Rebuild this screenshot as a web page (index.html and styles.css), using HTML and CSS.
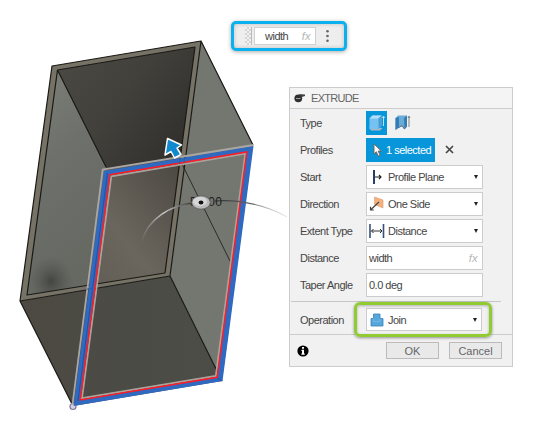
FILE: index.html
```html
<!DOCTYPE html>
<html lang="en">
<head>
<meta charset="utf-8">
<title>Extrude</title>
<link rel="stylesheet" href="styles.css">
</head>
<body>
<main class="canvas">
  <svg class="model" viewBox="0 0 554 421" width="554" height="421">
    <defs>
      <linearGradient id="left" x1="0" y1="0" x2=".3" y2="1"><stop offset="0" stop-color="#7d7f78"/><stop offset=".45" stop-color="#6e716b"/><stop offset="1" stop-color="#666862"/></linearGradient>
      <linearGradient id="back" x1="0" y1="0" x2="1" y2=".7"><stop offset="0" stop-color="#4b4a43"/><stop offset=".5" stop-color="#41403b"/><stop offset="1" stop-color="#302f2b"/></linearGradient>
      <linearGradient id="floor" x1="0" y1="1" x2=".9" y2="0"><stop offset="0" stop-color="#625d54"/><stop offset=".4" stop-color="#6b665d"/><stop offset="1" stop-color="#4c4943"/></linearGradient>
      <linearGradient id="front" x1="0" y1="0" x2="1" y2="0"><stop offset="0" stop-color="#4d4942"/><stop offset=".5" stop-color="#4b4b45"/><stop offset="1" stop-color="#4c4d46"/></linearGradient>
      <radialGradient id="shade"><stop offset="0" stop-color="#353633" stop-opacity=".7"/><stop offset="1" stop-color="#50524e" stop-opacity="0"/></radialGradient>
      <linearGradient id="arcl" x1="0" y1="1" x2="1" y2="0"><stop offset="0" stop-color="#777" stop-opacity=".3"/><stop offset=".6" stop-color="#ccc"/><stop offset="1" stop-color="#333"/></linearGradient>
      <linearGradient id="arcr"><stop offset="0" stop-color="#333"/><stop offset=".5" stop-color="#666"/><stop offset="1" stop-color="#ccc" stop-opacity=".4"/></linearGradient>
      <clipPath id="opening"><path d="M57.5 70 195 47 165 273 27 295Z"/></clipPath>
    </defs>
    <path fill="#767265" d="M52 66 201 41 170 276 20 301Z"/>
    <g clip-path="url(#opening)">
      <path fill="url(#left)" d="M57.5 70 106 167 88 290 27 295Z"/>
      <ellipse cx="51" cy="281" rx="23" ry="25" fill="url(#shade)"/>
      <path fill="url(#back)" d="M57.5 70 195 47 180 166 106 178 106 167Z"/>
      <path fill="url(#floor)" d="M106 170 182 157 165 273 86 287Z"/>
    </g>
    <path fill="#747770" d="M201 41 253 145 222 381 170 276Z"/>
    <path fill="url(#front)" d="M20 301 170 276 222 381 73 406Z"/>
    <g fill="none" stroke="#191917" stroke-width="1.2" stroke-linejoin="round">
      <path d="M52 66 201 41 170 276 20 301ZM57.5 70 195 47 165 273 27 295ZM57.5 70 106 167M201 41 253 145M170 276 222 381M20 301 73 406"/>
      <path stroke-width=".8" d="M182 164 230 261"/>
    </g>
    <circle cx="73" cy="406.500" r="3" fill="#d6d2df" stroke="#827998" stroke-width="1.2"/>
    <path fill="#2f69c0" fill-rule="evenodd" d="M104 171 253.500 146 222.500 381 73.500 406ZM109.500 174.500 79.800 400.300 217.500 377.500 247 151.500Z"/>
    <path fill="none" stroke="#214e98" stroke-width=".8" d="M107.500 173 78 401M216 377 222 381"/>
    <path fill="none" stroke="#aaa7a2" stroke-width="1.800" d="M72.500 404.500 102.700 169.600 253.500 145"/>
    <path fill="none" stroke="#aaa39c" stroke-width="1.800" d="M111.300 176.300 245.300 153.700 215.800 376 82 398.200Z"/>
    <path fill="none" stroke="#ff1c28" stroke-width="1.500" d="M109.800 174.700 246.800 152 217.200 377.300 80.200 399.900Z"/>
    <path fill="none" stroke="#315ca4" stroke-width="1" d="M180 157.500 179.500 164M184.500 157 184 163M87 289 93 288"/>
    <path fill="none" stroke="url(#arcl)" stroke-width="1.300" d="M142 241C148 218 172 205 193 203"/>
    <path fill="none" stroke="url(#arcr)" stroke-width="1.100" d="M215 201C240 199 268 206 287 217"/>
    <text class="dimension" x="190" y="206" textLength="32">50.00</text>
    <ellipse cx="201" cy="202.500" rx="9.300" ry="6.700" fill="#bbb" stroke="#555" stroke-width=".8"/>
    <ellipse cx="200" cy="201.500" rx="7" ry="4.500" fill="#d6d6d6"/>
    <ellipse cx="201" cy="202.500" rx="2.400" ry="1.900" fill="#111"/>
    <path fill="#1089ce" stroke="#fff" stroke-width="1.500" stroke-linejoin="round" d="M167.500 138.500 181.500 145 177 148 181 154.500 174.500 158 171 151.500 165 155Z"/>
  </svg>

  <div class="quick">
    <span class="grip"></span>
    <span class="quick-input"><span>width</span><i class="fx">fx</i></span>
    <svg width="5" height="14" viewBox="0 0 5 14" fill="#666"><circle cx="2.500" cy="2.300" r="1.300"/><circle cx="2.500" cy="7" r="1.300"/><circle cx="2.500" cy="11.700" r="1.300"/></svg>
  </div>

  <section class="panel">
    <header>
      <svg width="12" height="10" viewBox="0 0 12 10"><path d="M5 1 11 1.500V3L8 4Z" fill="#444"/><circle cx="4.300" cy="5.300" r="3.900" fill="#303030"/><path d="M2 5.500h4.500" stroke="#bbb" stroke-width=".8"/></svg>
      <span>EXTRUDE</span>
    </header>
    <div class="fields">
      <div class="row"><label>Type</label>
        <span class="type on"><svg width="17" height="18" viewBox="0 0 17 18"><path d="M1 13.500 3 16.500h9l2.500-2.500" fill="#a9b8c2"/><path d="M1.500 4.500 4.500 1.500H13.500V11.500L10.500 15H1.500Z" fill="#75c1f2"/><path d="M1.500 4.500 4.500 1.500H13.500L10.500 4.500Z" fill="#b2dffa"/><path d="M10.500 4.500 13.500 1.500V11.500L10.500 15Z" fill="#499cd4"/><path d="M15.500 3V12M14.500 4 15.500 2 16.500 4" fill="none" stroke="#d3e8f4" stroke-width=".9"/></svg></span>
        <span class="type"><svg width="17" height="18" viewBox="0 0 17 18"><path d="M1.500 4 4 1.500H13V12.500L10.500 15.500 8 12.500 5 13.500 1.500 16Z" fill="#6aabd8"/><path d="M1.500 4 5 3V13.500L1.500 16ZM10 4 13 1.500V12.500L10.500 15.500Z" fill="#337db5"/><path d="M5 13.500 8 11.500 10.500 15" fill="none" stroke="#667" stroke-width=".9"/><path d="M15 3V13M14 4 15 2 16 4" fill="none" stroke="#777" stroke-width=".9"/></svg></span>
      </div>
      <div class="row"><label>Profiles</label>
        <span class="selected"><svg width="9" height="14" viewBox="0 0 9 14"><path d="M1 1V11L3.300 8.700 5.200 13 7 12.200 5.200 8H8.300Z" fill="#fff" stroke="#79604e" stroke-width=".9"/></svg>1 selected</span>
        <svg class="clear" width="9" height="9" viewBox="0 0 9 9"><path d="M1 1 8 8M8 1 1 8" stroke="#484848" stroke-width="1.700"/></svg>
      </div>
      <div class="row"><label>Start</label>
        <span class="box select"><svg width="18" height="16" viewBox="0 0 18 16"><path d="M5 1V15" stroke="#273f65" stroke-width="2"/><path d="M6 8H12M10 6 12 8 10 10" fill="none" stroke="#222" stroke-width="1.100"/></svg>Profile Plane</span>
      </div>
      <div class="row"><label>Direction</label>
        <span class="box select"><svg width="18" height="16" viewBox="0 0 18 16"><path d="M5.500 1 14 4V12L5.500 8.500Z" fill="#f3b180" stroke="#df9a68" stroke-width=".6"/><path d="M10 6 2 13.500M1.500 10.800V14H4.800" fill="none" stroke="#444" stroke-width="1.200"/></svg>One Side</span>
      </div>
      <div class="row"><label>Extent Type</label>
        <span class="box select"><svg width="18" height="16" viewBox="0 0 18 16"><path d="M1 1V15M14.500 1V15" stroke="#36527b" stroke-width="1.600"/><path d="M2.500 8H13M4.500 6 2.500 8 4.500 10M11 6 13 8 11 10" fill="none" stroke="#333"/></svg>Distance</span>
      </div>
      <div class="row"><label>Distance</label><span class="box">width<i class="fx">fx</i></span></div>
      <div class="row"><label>Taper Angle</label><span class="box">0.0 deg</span></div>
    </div>
    <div class="operation row"><label>Operation</label>
      <span class="highlight"><span class="box select"><svg width="18" height="16" viewBox="0 0 18 16"><path d="M4.500 2H11V6.500H14V14H2V6.500H4.500Z" fill="#55a7dc" stroke="#3883b8" stroke-width=".8"/><path d="M4.500 6.500V9.500H11V6.500" fill="none" stroke="#83bfe5" stroke-width=".7"/></svg>Join</span></span>
    </div>
    <footer>
      <svg class="info" width="12" height="12" viewBox="0 0 12 12"><circle cx="6" cy="6" r="5.600"/><path fill="#fff" d="M5 2h2v1.800H5ZM4.500 4.800H7V8.500H7.700V9.700H4.400V8.500H5V6H4.500Z"/></svg>
      <button>OK</button><button>Cancel</button>
    </footer>
  </section>
</main>
</body>
</html>
```
FILE: styles.css
```css
* { box-sizing: border-box; }
body {
  margin: 0;
  background: #fff;
  color: #454545;
  font: 11px/14px "Liberation Sans", sans-serif;
  letter-spacing: -.5px;
  white-space: nowrap;
}
.canvas { position: relative; width: 554px; height: 421px; overflow: hidden; }
.model { display: block; }
.dimension { font: 12px "Liberation Sans", sans-serif; letter-spacing: 0; fill: #1c1c1c; }

/* Floating windows */
.quick {
  position: absolute;
  left: 231px;
  top: 21px;
  width: 116px;
  height: 30px;
  padding: 0 14px 0 11px;
  display: flex;
  align-items: center;
  border: 3px solid #0bb0ee;
  border-radius: 5px;
  background: #eee;
  box-shadow: 0 1px 4px #0005, inset 0 0 4px #0003;
}
.grip {
  width: 7px;
  height: 18px;
  margin-right: 2px;
  border-right: 1px solid #bbb;
  background: repeating-conic-gradient(#d3d3d3 0 25%, #f2f2f2 0 50%) 0 0 / 4px 4px;
}
.quick-input {
  width: 62px;
  height: 18px;
  margin-right: 9px;
  padding: 0 4px 0 10px;
  display: flex;
  align-items: center;
  justify-content: space-between;
  border: 1px solid #d0d0d0;
  background: #fff;
}
.fx { color: #b5b5b5; font-size: 11px; letter-spacing: .4px; }

.panel {
  position: absolute;
  left: 289px;
  top: 87px;
  width: 224px;
  height: 280px;
  border: 1px solid #ccc;
  background: #f1f1f1;
}
header {
  height: 21px;
  padding-left: 4px;
  display: flex;
  align-items: center;
  gap: 5px;
  border-bottom: 1px solid #ccc;
  background: #f4f4f4;
  color: #666;
  letter-spacing: -.7px;
}
.fields { height: 193px; margin: 0 11px 0 1px; padding: 0 0 0 9px; border-bottom: 1px solid #c6c6c6; }
.row { height: 27px; display: flex; align-items: center; }
label { width: 66px; flex: none; }
.type { width: 21px; height: 24px; margin-right: 5px; display: grid; place-items: center; }
.on, .selected { background: #0896db; }
.selected { width: 69px; height: 24px; padding-left: 7px; display: flex; align-items: center; gap: 4px; color: #fff; }
.clear { margin-left: 10px; }
.box {
  width: 117px;
  height: 24px;
  padding: 0 4px 0 2px;
  display: flex;
  align-items: center;
  border: 1px solid #ccc;
  background: #fff;
}
.box .fx { margin-left: auto; }
.select svg { margin-right: 1px; }
.select::after {
  content: "";
  margin-left: auto;
  border: solid transparent;
  border-width: 4px 2.5px 0;
  border-top-color: #222;
}
.operation { height: 32px; padding: 3px 0 0 10px; }
.operation label { width: 54px; }
.highlight {
  flex: none;
  width: 138px;
  height: 35px;
  padding: 3px 9px;
  border: 3px solid #90cc31;
  border-radius: 6px;
  box-shadow: 0 1px 3px #0006, inset 0 1px 3px #0004;
}
.highlight .box { width: 116px; height: 23px; }
footer {
  height: 32px;
  padding: 0 10px 0 7px;
  display: flex;
  align-items: center;
  gap: 10px;
  border-top: 1px solid #ccc;
}
.info { margin-right: auto; }
button {
  width: 53px;
  height: 17px;
  padding: 0;
  border: 1px solid #bbb;
  border-radius: 0;
  background: #e9e9e9;
  color: #666;
  font: 11px/14px "Liberation Sans", sans-serif;
}
```
